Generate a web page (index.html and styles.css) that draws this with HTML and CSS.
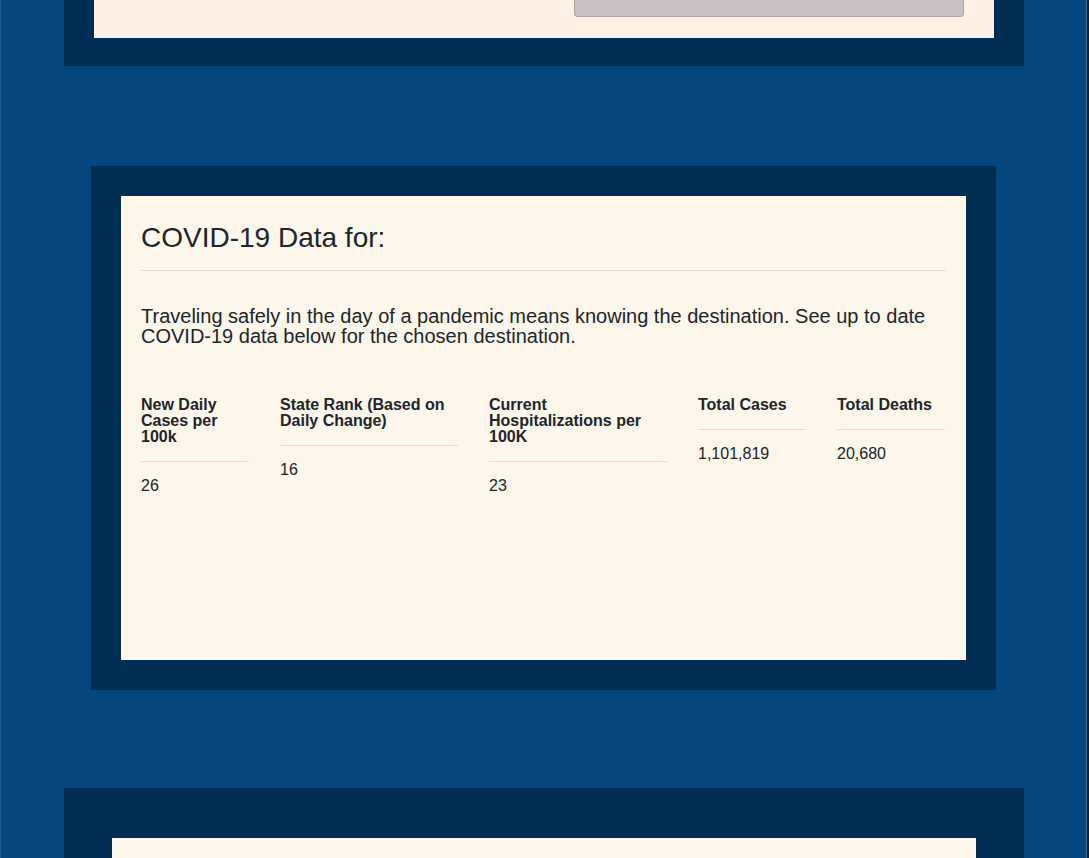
FILE: index.html
```html
<!DOCTYPE html>
<html lang="en">
<head>
<meta charset="utf-8">
<title>COVID-19 Data</title>
<link rel="stylesheet" href="styles.css">
</head>
<body>
<div class="page">
  <section class="frame frame-top">
    <div class="panel panel-top">
      <div class="button-row">
        <div class="gray-button"></div>
      </div>
    </div>
  </section>

  <section class="frame frame-covid">
    <div class="panel panel-covid">
      <h2 class="covid-title">COVID-19 Data for:</h2>
      <hr class="rule">
      <p class="covid-intro">Traveling safely in the day of a pandemic means knowing the destination. See up to date COVID-19 data below for the chosen destination.</p>
      <div class="stats">
        <div class="stat">
          <div class="stat-label">New Daily Cases per 100k</div>
          <hr class="rule stat-rule">
          <div class="stat-value">26</div>
        </div>
        <div class="stat">
          <div class="stat-label">State Rank (Based on Daily Change)</div>
          <hr class="rule stat-rule">
          <div class="stat-value">16</div>
        </div>
        <div class="stat">
          <div class="stat-label">Current Hospitalizations per 100K</div>
          <hr class="rule stat-rule">
          <div class="stat-value">23</div>
        </div>
        <div class="stat">
          <div class="stat-label">Total Cases</div>
          <hr class="rule stat-rule">
          <div class="stat-value">1,101,819</div>
        </div>
        <div class="stat">
          <div class="stat-label">Total Deaths</div>
          <hr class="rule stat-rule">
          <div class="stat-value">20,680</div>
        </div>
      </div>
    </div>
  </section>

  <section class="frame frame-bottom">
    <div class="panel panel-bottom"></div>
  </section>
</div>
</body>
</html>
```

FILE: styles.css
```css
html, body {
  margin: 0;
  padding: 0;
}

body {
  background: #03457c;
  border-right: 2px solid #1c1c1c;
  font-family: "Liberation Sans", Arial, Helvetica, sans-serif;
  color: #212529;
}

.page {
  border-left: 1px solid #245c8e;
  border-right: 1px solid #3b6d9a;
  height: 858px;
  box-sizing: border-box;
}

.frame {
  background: #002e53;
  box-sizing: border-box;
}

.frame-top {
  width: 960px;
  margin-left: 63px;
  padding: 0 30px 28px;
}

.panel-top {
  background: #fff1e4;
  height: 38px;
  padding: 0 30px 0 0;
  box-sizing: border-box;
}

.button-row {
  display: flex;
  justify-content: flex-end;
}

.gray-button {
  width: 390px;
  height: 17px;
  box-sizing: border-box;
  background: #c9c1c2;
  border: 1px solid #aaa3a4;
  border-top: none;
  border-radius: 0 0 4px 4px;
}

.frame-covid {
  width: 905px;
  margin: 100px 0 0 90px;
  padding: 30px;
}

.panel-covid {
  background: #fdf6eb;
  height: 464px;
  padding: 28px 20px 20px;
  box-sizing: border-box;
}

.covid-title {
  margin: 0;
  font-size: 28px;
  line-height: 28px;
  font-weight: 400;
}

.rule {
  border: 0;
  border-top: 1px solid #e2ddd3;
  margin: 18px 0 0;
}

.covid-intro {
  margin: 35px 0 0;
  font-size: 20px;
  line-height: 20px;
}

.stats {
  display: grid;
  grid-template-columns: 108px 178px 178px 108px 108px;
  column-gap: 31px;
  align-items: start;
  margin-top: 51px;
}

.stat-label {
  font-size: 16px;
  line-height: 16px;
  font-weight: 700;
}

.stat-rule {
  margin: 16px 0;
}

.stat-value {
  font-size: 16px;
  line-height: 16px;
}

.frame-bottom {
  width: 960px;
  margin: 98px 0 0 63px;
  padding: 50px 48px 0;
  height: 70px;
}

.panel-bottom {
  background: #fdf6eb;
  height: 20px;
}
```
